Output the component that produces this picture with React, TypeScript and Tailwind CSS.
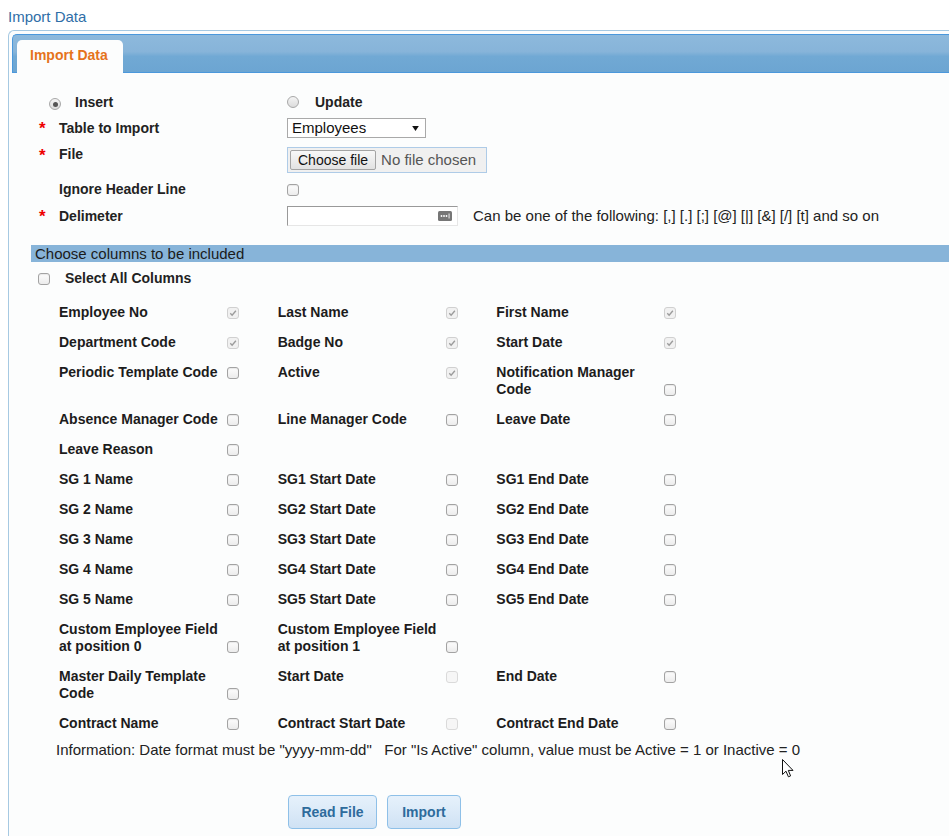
import React from 'react';

type BoxState = 'on' | 'off' | 'dim';

interface ColumnItem {
  lines: string[];
  state: BoxState;
}

const rows: (ColumnItem | null)[][] = [
  [
    { lines: ['Employee No'], state: 'on' },
    { lines: ['Last Name'], state: 'on' },
    { lines: ['First Name'], state: 'on' },
  ],
  [
    { lines: ['Department Code'], state: 'on' },
    { lines: ['Badge No'], state: 'on' },
    { lines: ['Start Date'], state: 'on' },
  ],
  [
    { lines: ['Periodic Template Code'], state: 'off' },
    { lines: ['Active'], state: 'on' },
    { lines: ['Notification Manager', 'Code'], state: 'off' },
  ],
  [
    { lines: ['Absence Manager Code'], state: 'off' },
    { lines: ['Line Manager Code'], state: 'off' },
    { lines: ['Leave Date'], state: 'off' },
  ],
  [{ lines: ['Leave Reason'], state: 'off' }, null, null],
  ...[1, 2, 3, 4, 5].map((n) => [
    { lines: [`SG ${n} Name`], state: 'off' as BoxState },
    { lines: [`SG${n} Start Date`], state: 'off' as BoxState },
    { lines: [`SG${n} End Date`], state: 'off' as BoxState },
  ]),
  [
    { lines: ['Custom Employee Field', 'at position 0'], state: 'off' },
    { lines: ['Custom Employee Field', 'at position 1'], state: 'off' },
    null,
  ],
  [
    { lines: ['Master Daily Template', 'Code'], state: 'off' },
    { lines: ['Start Date'], state: 'dim' },
    { lines: ['End Date'], state: 'off' },
  ],
  [
    { lines: ['Contract Name'], state: 'off' },
    { lines: ['Contract Start Date'], state: 'dim' },
    { lines: ['Contract End Date'], state: 'off' },
  ],
];

function Box({ state }: { state: BoxState }) {
  if (state === 'on') {
    return (
      <span className="inline-flex h-[12px] w-[12px] shrink-0 items-center justify-center rounded-[3px] border border-[#d0d0d0] bg-[#f1f1f1]">
        <svg viewBox="0 0 10 10" className="h-[8px] w-[8px]">
          <path d="M1.6 5.4 L3.9 7.8 L8.6 2.2" fill="none" stroke="#9b9b9b" strokeWidth="1.7" />
        </svg>
      </span>
    );
  }
  if (state === 'dim') {
    return <span className="inline-block h-[12px] w-[12px] shrink-0 rounded-[3px] border border-[#dadada] bg-[#f6f6f6]" />;
  }
  return (
    <span className="inline-block h-[12px] w-[12px] shrink-0 rounded-[3px] border border-[#a3a3a3] bg-[linear-gradient(to_bottom,#fdfdfd,#ececec)] shadow-[inset_0_1px_1px_rgba(0,0,0,0.08)]" />
  );
}

function Radio({ checked }: { checked?: boolean }) {
  return (
    <span className="inline-flex h-[12px] w-[12px] shrink-0 items-center justify-center rounded-full border border-[#a8a8a8] bg-[linear-gradient(to_bottom,#f4f4f4,#dcdcdc)]">
      {checked && <span className="h-[5px] w-[5px] rounded-full bg-[#555]" />}
    </span>
  );
}

function Star() {
  return <span className="w-[21px] pl-[1px] text-[17px] leading-[17px] font-bold text-[#e00]">*</span>;
}

export default function App() {
  return (
    <div className="relative h-[836px] w-[949px] overflow-hidden bg-white font-['Liberation_Sans',Arial,sans-serif] text-[14px] text-[#222]">
      <div className="pl-[8px] pt-[8px] text-[15px] leading-[17px] text-[#2f6ea7]">Import Data</div>

      <div className="mt-[5px] ml-[8px] h-[900px] rounded-tl-[6px] border-t border-l border-[#a6c9e2] bg-[#fcfdfd] pt-[3px] pl-[3px]">
        {/* tab bar */}
        <div className="flex h-[39px] items-end rounded-tl-[5px] border-y border-l border-[#4b98dc] bg-[linear-gradient(to_bottom,#8db9dc_0%,#87b4d9_45%,#71a9d4_58%,#6ca5d2_100%)] pl-[4px]">
          <div className="-mb-px h-[33px] w-[106px] rounded-t-[5px] bg-[#fcfdfd] pl-[13px] pt-[7px] leading-[17px] font-bold text-[#e5731c]">
            Import Data
          </div>
        </div>

        <div className="-ml-[3px]">
          {/* form */}
          <div className="pl-[29px]">
            <div className="mt-[20px] flex h-[18px] items-center">
              <div className="w-[21px] pl-[11px]">
                <Radio checked />
              </div>
              <div className="w-[228px] pl-[16px] font-bold">Insert</div>
              <Radio />
              <span className="ml-[16px] font-bold">Update</span>
            </div>

            <div className="mt-[7px] flex h-[20px] items-center">
              <Star />
              <div className="w-[228px] font-bold">Table to Import</div>
              <div className="flex h-[20px] w-[139px] items-center justify-between border border-[#a9a9a9] bg-white pl-[4px] pr-[6px] text-[15px] text-[#111]">
                <span>Employees</span>
                <svg viewBox="0 0 8 6" className="h-[5px] w-[7px]">
                  <path d="M0 0 H8 L4 6 Z" fill="#111" />
                </svg>
              </div>
            </div>

            <div className="mt-[9px] flex h-[26px] items-start">
              <Star />
              <div className="-mt-[1px] w-[228px] leading-[17px] font-bold">File</div>
              <div className="flex h-[26px] w-[200px] items-center border border-[#aecbe7] bg-[#f0f0f0] pl-[2px]">
                <span className="flex h-[20px] items-center rounded-[2px] border border-[#a4a4a4] bg-[linear-gradient(to_bottom,#f8f8f8,#e2e2e2)] px-[7px] text-[#111]">
                  Choose file
                </span>
                <span className="ml-[5px] text-[15px] text-[#555]">No file chosen</span>
              </div>
            </div>

            <div className="mt-[8px] flex h-[17px] items-center">
              <span className="w-[21px]" />
              <div className="w-[228px] font-bold">Ignore Header Line</div>
              <Box state="off" />
            </div>

            <div className="mt-[8px] flex h-[20px] items-center">
              <Star />
              <div className="w-[228px] font-bold">Delimeter</div>
              <div className="flex h-[20px] w-[171px] items-center justify-end border-t border-l border-t-[#999] border-l-[#999] border-r border-b border-r-[#e6e6e6] border-b-[#e6e6e6] bg-white pr-[5px]">
                <svg viewBox="0 0 14 10" className="h-[10px] w-[14px]">
                  <rect x="0" y="0" width="14" height="10" rx="1.5" fill="#767676" />
                  <circle cx="3.5" cy="5" r="0.9" fill="#fff" />
                  <circle cx="6" cy="5" r="0.9" fill="#fff" />
                  <circle cx="8.5" cy="5" r="0.9" fill="#fff" />
                  <rect x="10.6" y="2.5" width="0.9" height="5" fill="#fff" />
                </svg>
              </div>
              <span className="ml-[15px] text-[15px] text-[#222]">
                Can be one of the following: [,] [.] [;] [@] [|] [&amp;] [/] [t] and so on
              </span>
            </div>
          </div>

          {/* columns */}
          <div className="mt-[19px] ml-[22px] h-[17px] bg-[#87b4d9] pl-[4px] text-[15px] leading-[17px] text-[#1b1b1b]">
            Choose columns to be included
          </div>

          <div className="mt-[8px] flex h-[17px] items-center pl-[29px]">
            <Box state="off" />
            <span className="ml-[15px] font-bold">Select All Columns</span>
          </div>

          <div className="mt-[17px] pl-[50px]">
            {rows.map((row, i) => (
              <div key={i} className="grid w-[656px] grid-cols-3 items-start pb-[13px] leading-[17px]">
                {row.map((item, j) =>
                  item ? (
                    <div key={j} className="flex items-end">
                      <div className="w-[168px] font-bold text-[#1c1c1c]">
                        {item.lines.map((l) => (
                          <div key={l} className="whitespace-nowrap">
                            {l}
                          </div>
                        ))}
                      </div>
                      <div className="flex h-[17px] items-center">
                        <Box state={item.state} />
                      </div>
                    </div>
                  ) : (
                    <div key={j} />
                  ),
                )}
              </div>
            ))}
          </div>

          <div className="-mt-[4px] whitespace-pre pl-[47px] text-[15px] leading-[17px] text-[#222]">
            {'Information: Date format must be "yyyy-mm-dd"   For "Is Active" column, value must be Active = 1 or Inactive = 0'}
          </div>

          <div className="mt-[37px] flex gap-[10px] pl-[279px]">
            <button className="h-[34px] w-[89px] rounded-[4px] border border-[#8ec0e8] bg-[linear-gradient(to_bottom,#e6f1fb_0%,#dbeaf8_50%,#cfe2f4_100%)] font-bold text-[#2e6b9c]">
              Read File
            </button>
            <button className="h-[34px] w-[74px] rounded-[4px] border border-[#8ec0e8] bg-[linear-gradient(to_bottom,#e6f1fb_0%,#dbeaf8_50%,#cfe2f4_100%)] font-bold text-[#2e6b9c]">
              Import
            </button>
          </div>
        </div>
      </div>

      {/* mouse pointer */}
      <svg viewBox="0 0 12 19" className="absolute left-[782px] top-[759px] h-[19px] w-[12px]">
        <path d="M0.5 0.5 V15.5 L4 12.2 L6.4 17.8 L8.6 16.9 L6.3 11.4 H11 Z" fill="#fff" stroke="#111" strokeWidth="1" strokeLinejoin="round" />
      </svg>
    </div>
  );
}
